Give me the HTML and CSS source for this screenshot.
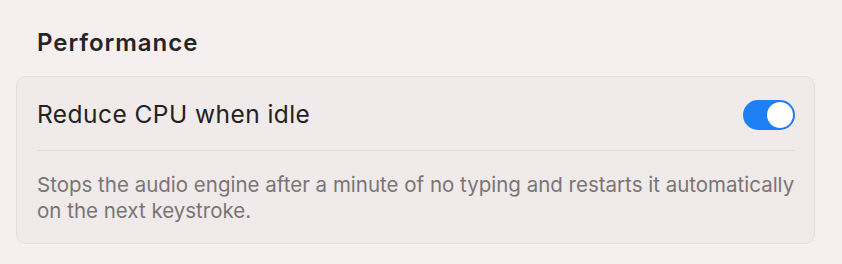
FILE: index.html
```html
<!DOCTYPE html>
<html lang="en">
<head>
<meta charset="utf-8">
<title>Performance</title>
<link rel="stylesheet" href="styles.css">
</head>
<body>
<section class="group">
  <h2 class="group-title">Performance</h2>
  <div class="card">
    <div class="row">
      <span class="row-label">Reduce CPU when idle</span>
      <span class="toggle on" role="switch" aria-checked="true"><span class="knob"></span></span>
    </div>
    <p class="row-desc">Stops the audio engine after a minute of no typing and restarts it automatically on the next keystroke.</p>
  </div>
</section>
</body>
</html>
```

FILE: styles.css
```css
* { box-sizing: border-box; }
html, body { margin: 0; padding: 0; }
body {
  background: #f5eff0;
  font-family: Inter, "Noto Sans", "DejaVu Sans", sans-serif;
  color: #242222;
  width: 842px;
  height: 264px;
  overflow: hidden;
}
.group {
  padding: 26px 27px 0 16px;
}
.group-title {
  margin: 0 0 16px 21px;
  font-size: 24px;
  line-height: 34px;
  font-weight: 600;
  color: #262424;
  letter-spacing: 0.95px;
}
.card {
  background: #f0eaea;
  border: 1px solid #e5dfdf;
  border-radius: 10px;
  padding: 0 19px 0 20px;
  height: 168px;
}
.row {
  display: flex;
  align-items: center;
  justify-content: space-between;
  height: 74px;
  border-bottom: 1px solid #e2dcdc;
}
.row-label {
  font-size: 24.5px;
  line-height: 30px;
  letter-spacing: 0.45px;
  color: #242222;
}
.toggle {
  position: relative;
  display: block;
  width: 52px;
  height: 30px;
  border-radius: 15px;
  background: #1d80f5;
  margin-top: 3px;
}
.toggle .knob {
  position: absolute;
  top: 2px;
  right: 2px;
  width: 26px;
  height: 26px;
  border-radius: 50%;
  background: #ffffff;
  box-shadow: 0 0 1px rgba(0,0,0,0.25);
}
.row-desc {
  margin: 0;
  padding-top: 21px;
  font-size: 20.5px;
  line-height: 26px;
  color: #7a7575;
}
```
